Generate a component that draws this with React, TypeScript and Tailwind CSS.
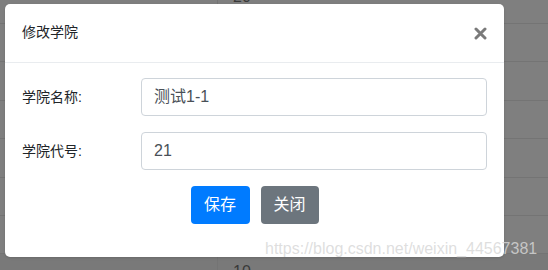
const rows = ["", "", "", "", "", "", "", ""];

export default function App() {
  return (
    <div
      className="relative h-[270px] w-[548px] overflow-hidden bg-[#7f7f7f]"
      style={{ fontFamily: '"Liberation Sans", "Noto Sans CJK SC", sans-serif' }}
    >
      {/* table behind the overlay */}
      <div className="flex flex-col">
        <div className="flex h-[24px] border-b border-[#747474]">
          <div className="w-[218px] border-r border-[#747474]" />
          <div className="-mt-[10px] pl-[15px] text-[16px] leading-[14px] text-[#3a3a3a]">20</div>
        </div>
        {rows.slice(0, 6).map((_, i) => (
          <div key={i} className="flex h-[38.4px] border-b border-[#747474]">
            <div className="w-[218px] border-r border-[#747474]" />
          </div>
        ))}
        <div className="flex h-[40px] bg-[#797979]">
          <div className="w-[218px] border-r border-[#747474]" />
          <div className="mt-[11px] pl-[15px] text-[16px] leading-[14px] text-[#3a3a3a]">10</div>
        </div>
      </div>

      {/* modal */}
      <div className="absolute left-[5px] top-[4px] flex h-[253px] w-[499px] flex-col rounded-[5px] bg-white shadow-sm">
        <div className="flex h-[59px] items-center justify-between border-b border-[#e9ecef] px-[17px] pb-[1px]">
          <span className="text-[14px] text-[#212529]">修改学院</span>
          <svg width="13" height="13" viewBox="0 0 13 13" className="mt-[2px]">
            <path d="M2 2 L11 11 M11 2 L2 11" stroke="#7a7a7a" strokeWidth="3" strokeLinecap="round" />
          </svg>
        </div>
        <div className="flex flex-col gap-[16px] px-[17px] pt-[15px]">
          <div className="grid grid-cols-[119px_1fr] items-center">
            <span className="text-[14px] text-[#212529]">学院名称:</span>
            <div className="flex h-[38px] items-center rounded-[4px] border border-[#ced4da] px-[12px] text-[16px] text-[#495057]">
              测试1-1
            </div>
          </div>
          <div className="grid grid-cols-[119px_1fr] items-center">
            <span className="text-[14px] text-[#212529]">学院代号:</span>
            <div className="flex h-[38px] items-center rounded-[4px] border border-[#ced4da] px-[12px] text-[16px] text-[#495057]">
              21
            </div>
          </div>
          <div className="flex justify-center gap-[11px]">
            <button className="h-[38px] w-[59px] rounded-[4px] bg-[#007bff] text-[16px] text-white">保存</button>
            <button className="h-[38px] w-[58px] rounded-[4px] bg-[#6c757d] text-[16px] text-white">关闭</button>
          </div>
        </div>
      </div>

      {/* watermark */}
      <div className="absolute left-[265px] top-[239px] text-[16px] leading-[20px] text-[rgba(215,215,215,0.82)]">
        https://blog.csdn.net/weixin_44567381
      </div>
    </div>
  );
}
